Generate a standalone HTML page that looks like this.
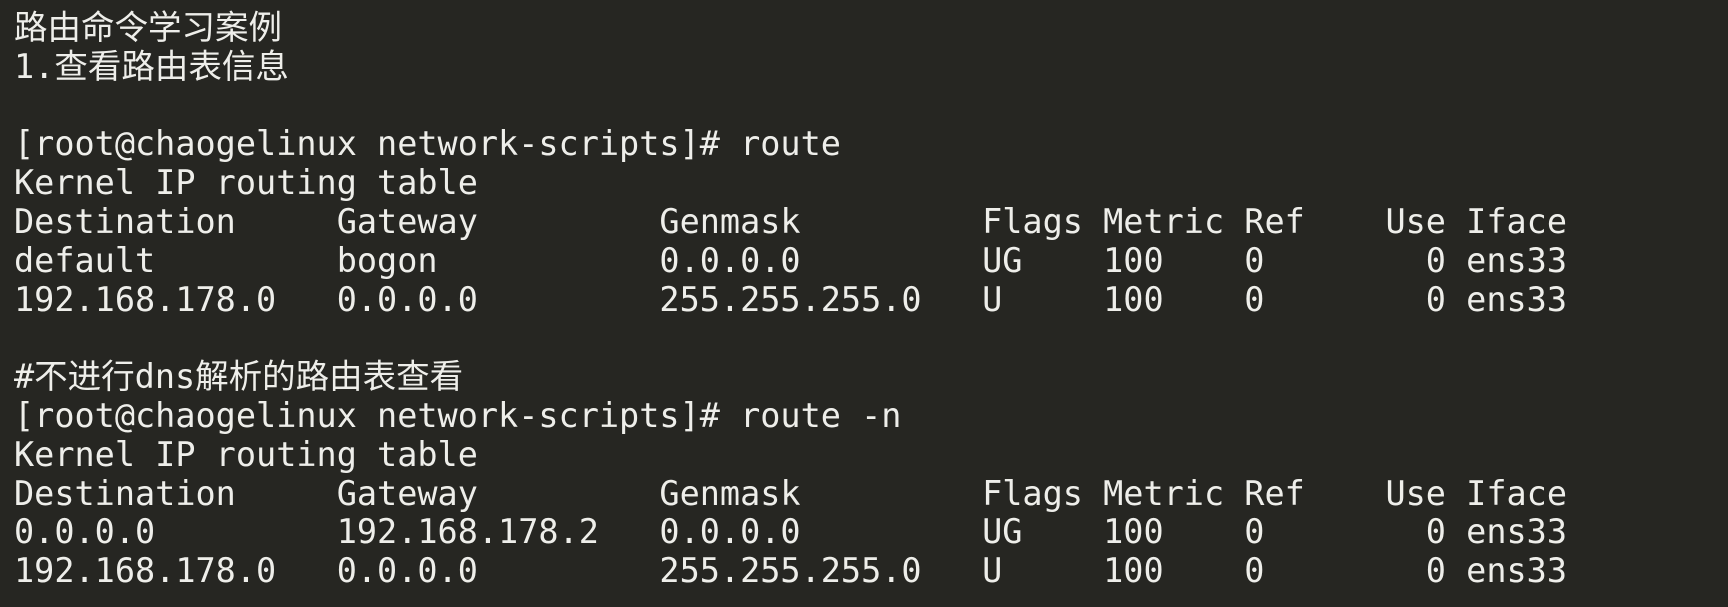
<!DOCTYPE html>
<html><head><meta charset="utf-8"><style>
html,body{margin:0;padding:0;background:#262622;width:1728px;height:607px;overflow:hidden}
pre{margin:0;position:absolute;left:14px;top:9px;font-family:"DejaVu Sans Mono","Liberation Mono","Noto Sans CJK SC",monospace;font-size:33.5px;line-height:38.8px;color:#eeeeea;white-space:pre}
pre div{height:38.8px}
</style></head><body><pre><div>路由命令学习案例</div><div>1.查看路由表信息</div><div> </div><div>[root@chaogelinux network-scripts]# route</div><div>Kernel IP routing table</div><div>Destination     Gateway         Genmask         Flags Metric Ref    Use Iface</div><div>default         bogon           0.0.0.0         UG    100    0        0 ens33</div><div>192.168.178.0   0.0.0.0         255.255.255.0   U     100    0        0 ens33</div><div> </div><div>#不进行dns解析的路由表查看</div><div>[root@chaogelinux network-scripts]# route -n</div><div>Kernel IP routing table</div><div>Destination     Gateway         Genmask         Flags Metric Ref    Use Iface</div><div>0.0.0.0         192.168.178.2   0.0.0.0         UG    100    0        0 ens33</div><div>192.168.178.0   0.0.0.0         255.255.255.0   U     100    0        0 ens33</div></pre></body></html>
